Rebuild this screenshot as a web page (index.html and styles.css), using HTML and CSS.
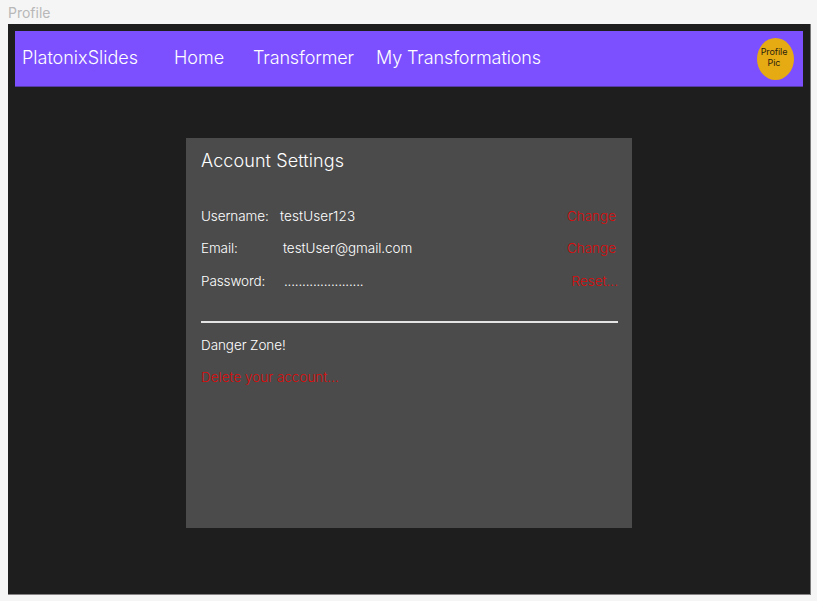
FILE: index.html
```html
<!DOCTYPE html>
<html lang="en">
<head>
<meta charset="utf-8">
<title>Profile</title>
<link rel="stylesheet" href="styles.css">
</head>
<body>
<div class="frame-label">Profile</div>
<div class="frame">
  <nav class="nav">
    <span class="brand">PlatonixSlides</span>
    <span class="link home">Home</span>
    <span class="link transformer">Transformer</span>
    <span class="link mine">My Transformations</span>
    <span class="avatar"><span class="avatar-text">Profile<br>Pic</span></span>
  </nav>
  <main class="card">
    <h1 class="title">Account Settings</h1>
    <div class="row"><span class="key">Username:</span><span class="value user">testUser123</span><span class="action">Change</span></div>
    <div class="row"><span class="key">Email:</span><span class="value email">testUser@gmail.com</span><span class="action">Change</span></div>
    <div class="row"><span class="key">Password:</span><span class="value password">......................</span><span class="action reset">Reset...</span></div>
    <div class="divider"></div>
    <div class="row danger">Danger Zone!</div>
    <div class="row delete">Delete your account...</div>
  </main>
</div>
</body>
</html>
```

FILE: styles.css
```css
* { box-sizing: border-box; }
body {
  margin: 0;
  height: 601px;
  overflow: hidden;
  background: #f5f5f5;
  font-family: Inter, "Liberation Sans", sans-serif;
  font-weight: 300;
  color: #fff;
}
.frame-label {
  height: 24px;
  padding: 4px 0 0 8px;
  font-size: 14px;
  line-height: 18px;
  font-weight: 400;
  color: #b8b8b8;
}
.frame {
  width: 803px;
  height: 571px;
  margin-left: 8px;
  padding: 7px 7px 0;
  border-right: 1px solid #777;
  border-bottom: 1px solid #858383;
  background: #1e1e1e;
}
.nav {
  display: flex;
  align-items: center;
  width: 788px;
  height: 56px;
  padding: 0 9px 1px 7px;
  border-bottom: 1px solid #573aa8;
  background: #7c50ff;
  font-size: 18px;
  line-height: 22px;
  white-space: nowrap;
}
.brand { width: 152px; }
.home { width: 79px; }
.transformer { width: 123px; letter-spacing: -0.13px; }
.mine { letter-spacing: -0.1px; }
.avatar {
  display: flex;
  justify-content: center;
  width: 37px;
  height: 42px;
  margin: 2px 0 0 auto;
  padding: 8px 3px 0 0;
  border-radius: 50%;
  background: #e6aa13;
  color: #2c230d;
  font-size: 9px;
  line-height: 11px;
  font-weight: 400;
  letter-spacing: -0.1px;
  text-align: center;
}
.card {
  width: 446px;
  height: 390px;
  margin: 51px 0 0 171px;
  padding: 12px 14px 0 15px;
  background: #4b4b4b;
  font-size: 13.5px;
}
.title {
  height: 50px;
  margin: 0;
  font-size: 18px;
  line-height: 22px;
  font-weight: 300;
  letter-spacing: 0.1px;
}
.row {
  display: flex;
  height: 32.3px;
  line-height: 32px;
  white-space: nowrap;
}
.key { width: 79px; letter-spacing: -0.1px; }
.user { letter-spacing: 0.1px; }
.email { margin-left: 3px; letter-spacing: -0.05px; }
.password { margin-left: 4px; letter-spacing: -0.2px; }
.action { margin: 0 2px 0 auto; }
.reset { margin-right: 0; }
.action, .delete { color: #db0c0c; }
.danger { letter-spacing: -0.08px; }
.divider {
  height: 2px;
  margin: 24px 0 6px;
  background: #e4e4e4;
}
```
